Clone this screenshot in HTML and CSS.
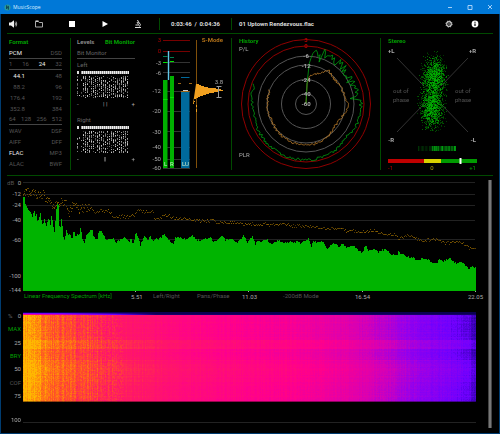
FILE: index.html
```html
<!DOCTYPE html>
<html lang="en">
<head>
<meta charset="utf-8">
<title>MusicScope</title>
<link rel="stylesheet" href="styles.css">
</head>
<body>
<div class="window">
  <header class="titlebar">
    <svg class="app-icon" viewBox="0 0 8 8" aria-hidden="true"><circle cx="4" cy="4" r="3.5" fill="#2b9a9a"/><path d="M3 1.5v4M5 2.5v4M3 5.5q1-3 2-3" fill="none" stroke="#08394a"/></svg>
    <span class="app-name">MusicScope</span>
    <div class="window-controls">
      <button aria-label="Minimize"><svg viewBox="0 0 6 6"><path d="M1 3.5h4"/></svg></button>
      <button aria-label="Maximize"><svg viewBox="0 0 6 6"><path d="M1 1.5h4v4H1z"/></svg></button>
      <button aria-label="Close"><svg viewBox="0 0 6 6"><path d="M1 1l4 4M5 1l-4 4"/></svg></button>
    </div>
  </header>

  <nav class="toolbar">
    <button class="volume" aria-label="Volume"><svg viewBox="0 0 10 10"><path d="M1 3.5h2l3-2.3v7.6l-3-2.3H1z" fill="#eee"/><path d="M7 3.5q1 1.500 0 3M8 2.500q1.500 2.500 0 5" fill="none" stroke="#ccc" stroke-width=".8"/></svg></button>
    <div class="transport">
      <button aria-label="Open"><svg viewBox="0 0 10 10"><path d="M1.500 8V2.500h3l.7 1h3.300V8z" fill="none" stroke="#aaa"/><path d="M1.500 2h3" stroke="#eee"/></svg></button>
      <button aria-label="Stop"><svg viewBox="0 0 10 10"><path d="M2 2h6v6H2z" fill="#fff"/></svg></button>
      <button aria-label="Play"><svg viewBox="0 0 10 10"><path d="M2.500 2l5.500 3-5.500 3z" fill="#fff"/></svg></button>
      <button aria-label="Analyze"><svg viewBox="0 0 10 10"><path d="M4.500 1l1.500 3M4 3l1.500 2.500M6 3.500q2.500 2 .5 4M2.500 6h3.500M2 8.500h6" fill="none" stroke="#ddd"/></svg></button>
    </div>
    <div class="time"><span>0:03:46</span><span>/</span><span>0:04:36</span></div>
    <div class="track">01 Uptown Rendezvous.flac</div>
    <div class="tools">
      <button aria-label="Settings"><svg viewBox="0 0 10 10"><circle cx="5" cy="5" r="2.300" fill="none" stroke="#ccc" stroke-width="1.200"/><circle cx="5" cy="5" r="3.100" fill="none" stroke="#ccc" stroke-width="1" stroke-dasharray="1.220 1.215"/><circle cx="5" cy="5" r=".8" fill="#bbb"/></svg></button>
      <button aria-label="Information"><svg viewBox="0 0 10 10"><circle cx="5" cy="5" r="3.400" fill="#fff"/><path d="M5 4.500v2.500M5 2.700v1" stroke="#000" stroke-width="1.200"/></svg></button>
    </div>
  </nav>

  <main>
    <div class="panels">
      <section class="panel format">
        <h2 class="green">Format</h2>
        <div class="row ruled"><button class="on">PCM</button><button>DSD</button></div>
        <div class="row ruled"><button>1</button><button>16</button><button class="on">24</button><button>32</button></div>
        <div class="row rate"><button class="on">44.1</button><button>48</button></div>
        <div class="row rate"><button>88.2</button><button>96</button></div>
        <div class="row rate"><button>176.4</button><button>192</button></div>
        <div class="row rate"><button>352.8</button><button>384</button></div>
        <div class="row ruled"><button>64</button><button>128</button><button>256</button><button>512</button></div>
        <div class="row"><button>WAV</button><button>DSF</button></div>
        <div class="row"><button>AIFF</button><button>DFF</button></div>
        <div class="row"><button class="on">FLAC</button><button>MP3</button></div>
        <div class="row"><button>ALAC</button><button>BWF</button></div>
      </section>

      <section class="panel levels">
        <div class="tabs"><button>Levels</button><button class="green">Bit Monitor</button></div>
        <div class="row ruled">Bit Monitor</div>
        <div class="row">Left</div>
        <canvas class="bits" width="53" height="28" data-seed="3"></canvas>
        <div class="balance"><span>-</span><span>|&nbsp;|</span><span>+</span></div>
        <div class="row">Right</div>
        <canvas class="bits" width="53" height="28" data-seed="8"></canvas>
        <div class="balance"><span>-</span><span>||</span><span>+</span></div>
      </section>

      <section class="panel meter">
        <svg viewBox="145 38 86 132">
          <path d="M163 40.500h27M163 51.500h27" stroke="#700"/>
          <path d="M163 62.500h27M163 72.500h27M163 91.500h27M163 111.500h27M163 131.500h27M163 147.500h27M163 159.500h27M163 168.500h27" stroke="#333"/>
          <g class="end red"><text x="161" y="42">3</text><text x="161" y="53">0</text></g>
          <g class="end"><text x="161" y="65">-3</text><text x="161" y="75">-6</text><text x="161" y="93">-12</text><text x="161" y="113">-20</text><text x="161" y="134">-30</text><text x="161" y="149">-40</text><text x="161" y="161">-50</text><text x="161" y="170">-60</text></g>
          <path d="M163 80h4.500v88H163zM170 76h4v92h-4z" fill="#00b000"/>
          <path d="M163 62.500h4.500M170 61.500h4M163 99.500h4.500M170 97.500h4" stroke="#00e000"/>
          <path d="M163 56.500h4.500M170 57.500h4" stroke="#008050"/>
          <path d="M168.500 51v29" stroke="#60c8e8" stroke-width="1.400"/>
          <path d="M181 91h8.500v77H181z" fill="#006a9c"/>
          <path d="M181 77.500h8.500" stroke="#006a9c"/>
          <path d="M178 83.500h3M189 83.500h3M181 91.500h8.500" stroke="#a06818"/>
          <path d="M183 90.500h5" stroke="#ccc"/>
          <g class="channel"><text x="164" y="166">L</text><text x="170" y="166">R</text><text x="182" y="166">LU</text></g>
          <path d="M196.500 40v128" stroke="#80500a"/>
          <path d="M196 84h3v1h2v1h3v1h4v1h8v1h5v1h2v1h-4v1h-5v1h-5v1h-3v1h-3v1h-3v1h-2v1h-2v1h-2v2h1v1h-1v2h-1z M196 105h1v2h-1zM196 109h1v3h-1z" fill="#f0a020"/>
          <path d="M218.500 86v11M216.500 86.500h5M216.500 97.500h5" stroke="#999" fill="none"/>
          <text x="219" y="84" class="mid">3.8</text>
          <text x="223" y="42" class="bold orange" text-anchor="end">S-Mode</text>
        </svg>
      </section>

      <section class="panel history">
        <svg viewBox="232 38 148 132">
          <g fill="none"><circle cx="306" cy="104" r="64.500" stroke="#900000"/><circle cx="306" cy="104" r="58" stroke="#900000"/>
          <g stroke="#555"><circle cx="306" cy="104" r="48"/><circle cx="306" cy="104" r="39"/><circle cx="306" cy="104" r="24.500"/><circle cx="306" cy="104" r="10.500"/></g>
          <path id="trace-low" stroke="#b87a28" stroke-width=".8"/><path id="trace-high" stroke="#00a010" stroke-width=".8"/></g>
          <g class="mid bold"><text class="red" x="306" y="42">3</text><text class="red" x="306" y="48">0</text><text x="306" y="58">-6</text><text x="306" y="68">-12</text><text x="306" y="82">-24</text><text x="306" y="96">-40</text><text x="306" y="106">-60</text></g>
          <text x="239" y="43" class="bold green">History</text><text x="239" y="51">P/L</text><text x="239" y="157">PLR</text>
        </svg>
      </section>

      <section class="panel stereo">
        <svg viewBox="381 38 112 132">
          <path d="M397 58l27 28M468 58l-27 28M397 132l27-28M468 132l-27-28" stroke="#333"/>
          <g id="scatter" fill="#00c000"></g>
          <g id="phase" fill="#00a010"></g>
          <path d="M388 159h36v4h-36z" fill="#c00000"/><path d="M424 159h17v4h-17z" fill="#d8d000"/><path d="M441 159h36v4h-36z" fill="#009a00"/><path d="M460.500 158v6" stroke="#fff" stroke-width="2"/>
          <text x="388" y="43" class="bold green">Stereo</text>
          <g class="bold"><text x="388" y="53">+L</text><text x="476" y="53" text-anchor="end">+R</text><text x="388" y="142">-R</text><text x="476" y="142" text-anchor="end">-L</text></g>
          <g class="dim"><text x="393" y="93">out of</text><text x="393" y="102">phase</text><text x="455" y="93">out of</text><text x="455" y="102">phase</text></g>
          <text x="388" y="170" class="red">-1</text><text x="432" y="170" class="mid yellow">0</text><text x="476" y="170" text-anchor="end" class="green">+1</text>
        </svg>
      </section>
    </div>

    <div class="analysis">
      <div class="charts">
        <section class="spectrum">
          <svg viewBox="7 176 479 116">
            <path d="M23 182.500h452M23 194.500h452M23 205.500h452M23 220.500h452M23 239.500h452" stroke="#222"/>
            <text x="7" y="185" class="dim">dB</text>
            <g class="end"><text x="21" y="185">0</text><text x="21" y="196">-12</text><text x="21" y="207">-24</text><text x="21" y="222">-40</text><text x="21" y="242">-60</text><text x="21" y="278">-100</text><text x="21" y="292">-144</text></g>
            <path id="spectrum-fill" fill="#00b400"/>
            <g id="spectrum-peaks" fill="#8a6000"></g>
            <path d="M135.500 291v1M248.500 291v1M362.500 291v1M475.500 291v1" stroke="#aaa"/>
          </svg>
          <div class="frequency-row">
            <button class="green">Linear Frequency Spectrum [kHz]</button><span>5.51</span><button>Left/Right</button><button>Pans/Phase</button><span>11.03</span><button>-200dB Mode</button><span>16.54</span><span>22.05</span>
          </div>
        </section>
        <section class="spectrogram">
          <div class="time-axis">
            <div class="percent"><span class="unit">%</span><span>0</span></div>
            <button class="green">MAX</button><span>25</span><button class="green">BRY</button><span>50</span><button>COF</button><span>75</span>
          </div>
          <canvas id="spectrogram" width="453" height="90"></canvas>
          <span class="final">100</span><div class="final-line"></div>
        </section>
      </div>
      <div class="scrollbar"></div>
    </div>
  </main>
</div>
<script src="scope.js"></script>
</body>
</html>
```
FILE: styles.css
```css
* { box-sizing: border-box; }
body { margin: 0; background: #000; color: #666; font: 6px/8px Roboto, "Liberation Sans", sans-serif; }
button { display: block; margin: 0; padding: 0; border: 0; background: none; color: inherit; font: inherit; white-space: nowrap; }
svg, canvas { display: block; }
h2 { margin: 0; font-size: 6px; line-height: 8px; }
.window { min-height: 100vh; background: #000; border: solid #003c70; border-width: 0 1px 1px; }

.titlebar { display: flex; align-items: center; height: 14px; margin: 0 -1px; padding: 0 7px 0 4px; gap: 2px; background: #0078d7; color: #dceeff; }
.app-icon { width: 7px; height: 7px; }
.app-name { font: 5px/8px "Open Sans", sans-serif; }
.window-controls { display: flex; gap: 14px; margin-left: auto; }
.window-controls svg { width: 6px; height: 6px; fill: none; stroke: #cce6ff; stroke-width: .8; }

.toolbar { display: flex; align-items: center; height: 20px; margin: 0 6px; padding-left: 1px; border-bottom: 1px solid #004a00; color: #ddd; font-weight: bold; }
.toolbar button, .toolbar svg { width: 10px; height: 10px; }
.transport { display: flex; gap: 23px; margin-left: 16px; padding-right: 16px; }
.time, .track { height: 12px; line-height: 12px; border-left: 1px solid #004a00; }
.time { display: flex; justify-content: space-between; width: 72px; padding: 0 11px; }
.track { padding-left: 7px; }
.tools { display: flex; gap: 16px; margin-left: auto; padding-right: 13px; }

.panels { display: grid; grid-template-columns: 64fr 74fr 87fr 149fr 112fr; margin: 0 6px; padding: 4px 0 5px; border-bottom: 1px solid #004a00; }
.panel { min-width: 0; height: 132px; }
.panel svg { width: 100%; height: 132px; }
.format, .meter, .history { border-right: 1px solid #004a00; }
.format { padding: 0 8px 0 2px; color: #555; }
.format h2, .tabs { margin-bottom: 2px; }
.row { display: flex; align-items: center; justify-content: space-between; height: 11px; }
.ruled { border-bottom: 1px solid #444; }
.rate button:first-child { width: 16px; text-align: right; }
.format .on { color: #eee; }
.levels { padding: 0 10px 0 6px; }
.tabs { display: flex; justify-content: space-between; font-weight: bold; color: #888; }
.bits { width: 53px; height: 28px; }
.balance { display: flex; justify-content: space-between; height: 16px; line-height: 12px; color: #aaa; }

svg text { font-family: Roboto, "Liberation Sans", sans-serif; font-size: 6px; fill: #aaa; }
svg .end text { text-anchor: end; }
svg .mid, svg .mid text { text-anchor: middle; }
svg .bold, svg .bold text { font-weight: bold; }
.green, svg text.green { color: #00a000; fill: #00a000; }
svg text.red, svg .red text { fill: #b00000; }
svg text.orange { fill: #b07018; }
svg text.yellow { fill: #b0a000; }
svg text.dim, svg .dim text { fill: #555; }
svg .channel text { fill: #cec; }

.analysis { display: flex; margin: 0 6px; }
.charts { flex: 1; min-width: 0; padding-bottom: 8px; }
.scrollbar { width: 4px; margin: 4px 1px 4px 2px; background: #777; border: solid #444; border-width: 0 1px; }
.spectrum svg { width: 100%; height: auto; }
.frequency-row { display: grid; grid-template-columns: 107fr 22fr 44fr 45fr 41fr 72fr 113fr 18fr; padding-left: 17px; height: 16px; color: #555; text-align: left; }
.frequency-row button { text-align: left; height: 8px; }
.frequency-row .green { color: #00a000; }
.frequency-row span { color: #aaa; line-height: 10px; }
.spectrogram { display: grid; grid-template-columns: 14px 1fr; column-gap: 2px; margin-right: 10px; padding-top: 4px; }
#spectrogram { width: 100%; height: 90px; }
.time-axis { display: flex; flex-direction: column; justify-content: space-between; height: 88px; align-items: flex-end; color: #aaa; }
.time-axis button { color: #555; }
.time-axis button.green { color: #00a000; }
.percent { display: flex; justify-content: space-between; width: 13px; }
.unit { color: #666; }
.final { margin-top: 14px; text-align: right; color: #aaa; }
.final-line { margin-top: 20px; height: 1px; background: #222; }
```
FILE: scope.js
```js
function generator(seed) {
  let s = seed * 7919 + 13;
  return () => { s = (s * 1664525 + 1013904223) >>> 0; return s / 4294967296; };
}
function interpolate(points, x) {
  for (let i = 1; i < points.length; i++) {
    if (x <= points[i][0]) {
      const [ax, ay] = points[i - 1], [bx, by] = points[i];
      return ay + (by - ay) * Math.max(0, (x - ax) / (bx - ax));
    }
  }
  return points[points.length - 1][1];
}
const pairs = text => text.trim().split(/\s+/).map(p => p.split(',').map(Number));
const byId = id => document.getElementById(id);

/* Bit monitor: one header row of active bits above the sample history. */
document.querySelectorAll('.bits').forEach(canvas => {
  const g = canvas.getContext('2d'), rnd = generator(+canvas.dataset.seed);
  g.fillStyle = '#ddd';
  g.fillRect(0, 1, 2, 3);
  for (let c = 2; c < 26; c++) {
    g.fillStyle = '#eee'; g.fillRect(c * 2 + 1, 1, 1, 3);
    g.fillStyle = '#999'; g.fillRect(c * 2, 1, 1, 3);
  }
  for (let y = 6; y < 28; y++) {
    for (let c = 0; c < 26; c++) {
      const chance = c === 0 ? (y % 4 ? .6 : 0) : c < 3 ? .1 : .6;
      if (rnd() < chance) {
        const v = 60 + Math.floor(rnd() * 150);
        g.fillStyle = `rgb(${v},${v},${v})`;
        g.fillRect(c * 2, y, 1, 1);
      }
    }
  }
});

/* Polar history traces, clockwise from the top. */
function trace(id, profile, from, to, noise, seed) {
  const rnd = generator(seed);
  let d = 'M306 104';
  for (let a = from; a <= to; a += 1.6) {
    const r = interpolate(profile, a) + (rnd() - .5) * noise(a);
    const t = a * Math.PI / 180;
    d += `L${(306 + r * Math.sin(t)).toFixed(1)} ${(104 - r * Math.cos(t)).toFixed(1)}`;
  }
  byId(id).setAttribute('d', d);
}
trace('trace-high', pairs('3,20 5,40 9,50 14,47 20,53 45,52 60,50 78,53 81,54 83,44 85,54 110,55 130,52 150,55 180,56 230,55 260,53 275,54 292,56'), 3, 292, a => a < 20 ? 13 : a < 75 ? 9 : a < 100 ? 5 : 3, 5);
trace('trace-low', pairs('3,20 7,28 20,32 35,40 42,38 60,38 80,40 92,42 110,38 130,36 150,40 180,41 220,40 245,38 280,39 292,39'), 3, 291, () => 2.6, 9);

/* Goniometer dots and correlation strip. */
{
  const rnd = generator(21);
  const bell = () => (rnd() + rnd() + rnd() - 1.5) / 1.5;
  let out = '';
  for (let i = 0; i < 2700; i++) {
    const lobe = i % 2 ? 77 : 107;
    const x = 433 + bell() * 16 + (lobe > 90 ? -1 : 1);
    const y = lobe + bell() * 28;
    out += `<rect x="${Math.round(x)}" y="${Math.round(y)}" width="1" height="1" opacity="${(.15 + rnd() * .4).toFixed(2)}"/>`;
  }
  byId('scatter').innerHTML = out;
  out = '';
  for (let x = 418; x < 456; x++) {
    const o = x < 431 ? rnd() * .4 : .25 + rnd() * .75;
    out += `<rect x="${x}" y="146" width="1" height="5" opacity="${o.toFixed(2)}"/>`;
  }
  byId('phase').innerHTML = out;
}

/* Spectrum envelopes: x and y in thirds of a chart unit. */
const level = pairs(`68,75 72,72 75,95 80,108 85,112 90,120 97,135 101,112 104,130 108,125 112,152 120,122 124,155 128,160 132,140 137,168 145,135 150,160 154,127 158,165 162,180 167,120 171,97 174,100 178,185 184,130 188,195 192,205 198,178 203,188 210,190 215,205 220,172 224,190 235,190 241,165 247,205 252,210 260,185 266,183 274,168 280,195 290,205 295,175 303,178 310,188 318,205 330,200 340,198 346,215 355,205 375,197 388,210 392,192 397,218 402,205 406,182 412,190 420,220 430,195 434,190 443,210 448,190 455,205 475,200 493,188 500,198 518,218 525,198 540,197 560,205 575,190 590,205 610,203 630,197 640,210 667,192 675,205 690,200 710,212 731,190 740,215 755,192 765,215 772,205 780,212 797,200 815,220 830,205 860,212 870,208 880,215 890,205 900,215 925,200 933,225 938,205 950,215 965,205 980,232 1000,210 1015,225 1025,215 1040,228 1060,220 1075,235 1085,245 1095,220 1105,235 1125,230 1135,240 1155,230 1170,245 1190,250 1193,238 1205,247 1225,255 1240,258 1250,265 1270,260 1285,265 1307,278 1315,262 1330,268 1347,258 1360,270 1375,275 1380,268 1395,280 1405,290 1415,285 1427,287`);
const peaks = pairs(`70,65 95,58 110,68 130,65 145,90 160,95 172,103 183,85 195,90 207,118 215,100 240,112 260,105 285,118 320,112 345,138 365,132 385,135 400,128 418,108 440,122 455,110 465,143 485,130 500,128 520,138 560,138 600,145 640,145 655,150 700,150 730,155 770,155 830,157 855,155 880,160 930,162 960,168 1010,168 1040,175 1080,178 1125,175 1150,185 1185,188 1195,198 1225,190 1265,205 1300,200 1340,212 1385,210 1410,228 1427,232`);
{
  const rnd = generator(4);
  let d = 'M23 291', dots = '';
  for (let x = 23; x < 476; x++) {
    const y = Math.round(172 + interpolate(level, x * 3) / 3 + (rnd() - .5) * 2);
    d += `V${y}H${x + 1}`;
    const spread = x < 90 ? 9 : x < 180 ? 4 : 3;
    const count = x < 90 ? 2 : 1;
    for (let i = 0; i < count; i++) {
      const p = Math.round(172 + interpolate(peaks, x * 3) / 3 + (rnd() - .5) * spread);
      dots += `<rect x="${x}" y="${p}" width="1" height="1" opacity="${(.5 + rnd() * .5).toFixed(2)}"/>`;
    }
  }
  byId('spectrum-fill').setAttribute('d', d + 'V291z');
  byId('spectrum-peaks').innerHTML = dots;
}

/* Spectrogram: intensity falls with frequency and is mapped through a heat palette. */
{
  const canvas = byId('spectrogram'), g = canvas.getContext('2d'), rnd = generator(12);
  const palette = [[0, 0, 0, 60], [.1, 50, 0, 170], [.2, 110, 0, 255], [.3, 150, 0, 235], [.42, 215, 0, 180], [.55, 255, 0, 140], [.68, 255, 25, 100], [.8, 255, 80, 40], [.9, 255, 130, 15], [1, 255, 185, 0]];
  const intensity = pairs('0,1 10,.96 25,.86 60,.77 100,.69 160,.61 220,.57 270,.54 320,.48 360,.39 400,.28 430,.22 446,.18 453,.12');
  const columns = Array.from({ length: 453 }, (_, x) => (rnd() - .5) * (x < 90 ? .1 : .035));
  const colour = v => {
    v = Math.min(1, Math.max(0, v));
    const i = Math.max(1, palette.findIndex(p => p[0] >= v));
    const a = palette[i - 1], b = palette[i], t = (v - a[0]) / (b[0] - a[0]);
    return [1, 2, 3].map(k => Math.round(a[k] + (b[k] - a[k]) * t));
  };
  for (let y = 0; y < 90; y++) {
    let row = (rnd() - .5) * .03;
    if (y < 28) row -= .02;
    if (y >= 28 && y < 37) row += .035;
    if (y >= 37 && y < 48) row -= .015;
    if (y >= 48 && y < 70) row += .02;
    for (let x = 0; x < 453; x++) {
      let v = interpolate(intensity, x) + columns[x] + row + (rnd() - .5) * (x < 100 ? .09 : .03);
      if (y < 3) v = y === 0 ? .02 : Math.max(.04, .55 - x / 260) * (y / 2);
      const c = colour(v);
      const shade = y === 89 ? .6 : 1;
      g.fillStyle = `rgb(${c.map(n => Math.round(n * shade)).join(',')})`;
      g.fillRect(x, y, 1, 1);
    }
  }
}
```
